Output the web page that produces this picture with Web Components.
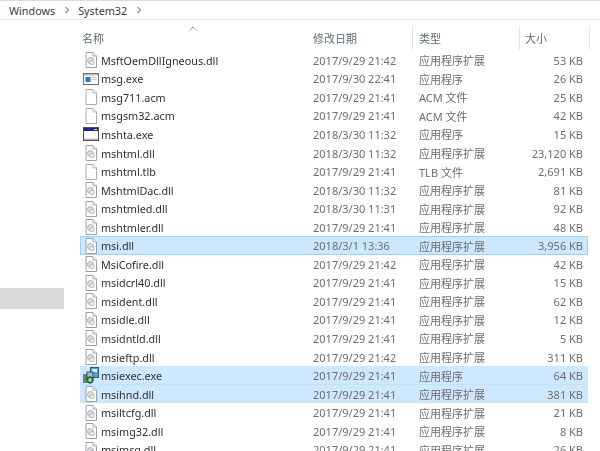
<!DOCTYPE html>
<html><head><meta charset="utf-8"><style>
html,body{margin:0;padding:0;background:#fff;height:451px;overflow:hidden;font-family:"Noto Sans","Noto Sans CJK SC",sans-serif;}
</style></head><body>
<x-window></x-window>
<script>
const ICONS={
dll:`<svg width="16" height="16" viewBox="0 0 16 16"><path d="M3 .5h7l3.5 3.5v11.500H3z" fill="#fff" stroke="#9aa0a6"/><path d="M10 .5V4h3.500" fill="#eef0f2" stroke="#a8adb2"/><circle cx="7.500" cy="8.500" r="3" fill="#dfe2e5" stroke="#a9adb2"/><circle cx="9" cy="10.500" r="2.200" fill="#eceeef" stroke="#b4b8bc"/></svg>`,
file:`<svg width="16" height="16" viewBox="0 0 16 16"><path d="M3 .5h7l3.500 3.500v11.500H3z" fill="#fff" stroke="#a6abb0"/><path d="M10 .5V4h3.500" fill="#f2f3f4" stroke="#b4b8bc"/></svg>`,
app:`<svg width="16" height="16" viewBox="0 0 16 16"><rect x=".5" y="2.500" width="15" height="11" fill="#fff" stroke="#6d7278"/><rect x="1" y="3" width="14" height="1.500" fill="#b8bcc0"/><rect x="2.500" y="6" width="5" height="5" fill="#1f7fd0"/><rect x="8.500" y="6" width="5" height="1" fill="#c4c8cc"/><rect x="8.500" y="8" width="5" height="1" fill="#c4c8cc"/></svg>`,
hta:`<svg width="16" height="16" viewBox="0 0 16 16"><rect x=".5" y="1.500" width="15" height="13" fill="#fff" stroke="#4d4f57"/><rect x="1" y="2" width="14" height="3" fill="#22229a"/><rect x="11" y="3" width="3" height="1" fill="#dde"/><rect x="1" y="12.500" width="14" height="1.500" fill="#b9bbc0"/></svg>`,
msi:`<svg width="16" height="17" viewBox="0 0 16 17"><rect x="7.500" y="0.500" width="8" height="10" fill="#5a9bd0" stroke="#2b5a80"/><rect x="9" y="2" width="5" height="3" fill="#d5ebfa"/><rect x="4" y="5" width="6" height="8" fill="#9cc0d8" stroke="#35536a"/><path d="M1 7v9M3 7v9" stroke="#222" stroke-width="1.100"/><circle cx="7" cy="13" r="3.200" fill="#2da838" stroke="#145a1c"/><path d="M5.500 13h3M7 11.500v3" stroke="#dff5df"/></svg>`
};
const EXT='应用程序扩展',APP='应用程序';
const ROWS=[
['dll','MsftOemDllIgneous.dll','2017/9/29 21:42',EXT,'53 KB'],
['app','msg.exe','2017/9/30 22:41',APP,'26 KB'],
['file','msg711.acm','2017/9/29 21:41','ACM 文件','25 KB'],
['file','msgsm32.acm','2017/9/29 21:41','ACM 文件','42 KB'],
['hta','mshta.exe','2018/3/30 11:32',APP,'15 KB'],
['dll','mshtml.dll','2018/3/30 11:32',EXT,'23,120 KB'],
['file','mshtml.tlb','2017/9/29 21:41','TLB 文件','2,691 KB'],
['dll','MshtmlDac.dll','2018/3/30 11:32',EXT,'81 KB'],
['dll','mshtmled.dll','2018/3/30 11:31',EXT,'92 KB'],
['dll','mshtmler.dll','2017/9/29 21:41',EXT,'48 KB'],
['dll','msi.dll','2018/3/1 13:36',EXT,'3,956 KB','outline'],
['dll','MsiCofire.dll','2017/9/29 21:42',EXT,'42 KB'],
['dll','msidcrl40.dll','2017/9/29 21:41',EXT,'15 KB'],
['dll','msident.dll','2017/9/29 21:41',EXT,'62 KB'],
['dll','msidle.dll','2017/9/29 21:41',EXT,'12 KB'],
['dll','msidntld.dll','2017/9/29 21:41',EXT,'5 KB'],
['dll','msieftp.dll','2017/9/29 21:42',EXT,'311 KB'],
['msi','msiexec.exe','2017/9/29 21:41',APP,'64 KB','sel'],
['dll','msihnd.dll','2017/9/29 21:41',EXT,'381 KB','sel'],
['dll','msiltcfg.dll','2017/9/29 21:41',EXT,'21 KB'],
['dll','msimg32.dll','2017/9/29 21:41',EXT,'8 KB'],
['dll','msimsg.dll','2017/9/29 21:41',EXT,'26 KB']
];
const CHEV=`<svg width="6" height="8" viewBox="0 0 6 8"><path d="M1.500 1l3 3-3 3" fill="none" stroke="#8a8a8a" stroke-width="1.100"/></svg>`;
class XCrumbs extends HTMLElement{constructor(){super();this.attachShadow({mode:'open'}).innerHTML=`<style>
:host{display:flex;align-items:center;height:18px;border-top:1px solid #dcdcdc;border-bottom:1px solid #e6e6e6;padding-left:9px;font-size:10.800px;color:#3a3a3a;background:#fff}
span{display:block}.c{width:23px;display:flex;justify-content:center}
</style><span>Windows</span><span class="c">${CHEV}</span><span>System32</span><span class="c">${CHEV}</span>`}}
class XHeader extends HTMLElement{constructor(){super();this.attachShadow({mode:'open'}).innerHTML=`<style>
:host{display:grid;grid-template-columns:227px 106px 107px 70px;height:31px;position:relative;font-size:11px;color:#5f6b78}
div{border-right:1px solid #e5e5e5;margin-top:6px;height:24px;padding-left:2px;line-height:25px;white-space:nowrap}
div.first{border-right:0}
div.d{padding-left:6px}
div.e{padding-left:5px}
svg{position:absolute;left:109px;top:6px}
</style><div class="first">名称</div><div class="d">修改日期</div><div class="d">类型</div><div class="e">大小</div><svg width="8" height="5" viewBox="0 0 8 5"><path d="M.5 4.500l3.500-3.500 3.500 3.500" fill="none" stroke="#9aa2aa"/></svg>`}}
class XRow extends HTMLElement{constructor(){super();this.attachShadow({mode:'open'}).innerHTML=`<style>
:host{display:grid;grid-template-columns:21px 212px 106px 107px 57px;width:508px;height:18.550px;align-items:center;font-size:11px;color:#6d6d6d;white-space:nowrap}
:host([state=sel]){background:#cde8ff;box-shadow:inset 0 -.5px 0 #bcdcf5}
:host([state=outline]){background:#cce8ff;outline:1px solid #99d1ff;outline-offset:-1px}
.i{display:flex;justify-content:center;align-items:center;height:18px}
.n{color:#2f2f2f;font-size:10.800px}
.s{text-align:right}
</style><span class="i"><slot name="icon"></slot></span><span class="n"><slot name="name"></slot></span><span><slot name="date"></slot></span><span><slot name="type"></slot></span><span class="s"><slot name="size"></slot></span>`}}
class XSidebar extends HTMLElement{constructor(){super();this.attachShadow({mode:'open'}).innerHTML=`<style>
:host{display:block;width:80px;flex:none;padding-top:268px;box-sizing:border-box}
div{width:64px;height:21px;background:#d9d9d9}
</style><div></div>`}}
class XWindow extends HTMLElement{constructor(){super();const s=this.attachShadow({mode:'open'});s.innerHTML=`<style>
:host{display:block;height:451px;overflow:hidden;filter:blur(.4px)}
.m{display:flex}
.l{flex:1;min-width:0}
</style><x-crumbs></x-crumbs><div class="m"><x-sidebar></x-sidebar><div class="l"><x-header></x-header><div id="rows"></div></div></div>`;
const r=s.getElementById('rows');
ROWS.forEach(d=>{const e=document.createElement('x-row');if(d[5])e.setAttribute('state',d[5]);
e.innerHTML=`<span slot="icon" style="display:flex">${ICONS[d[0]]}</span><span slot="name">${d[1]}</span><span slot="date">${d[2]}</span><span slot="type">${d[3]}</span><span slot="size">${d[4]}</span>`;r.appendChild(e)});
}}
customElements.define('x-crumbs',XCrumbs);customElements.define('x-header',XHeader);customElements.define('x-row',XRow);customElements.define('x-sidebar',XSidebar);customElements.define('x-window',XWindow);
</script></body></html>
